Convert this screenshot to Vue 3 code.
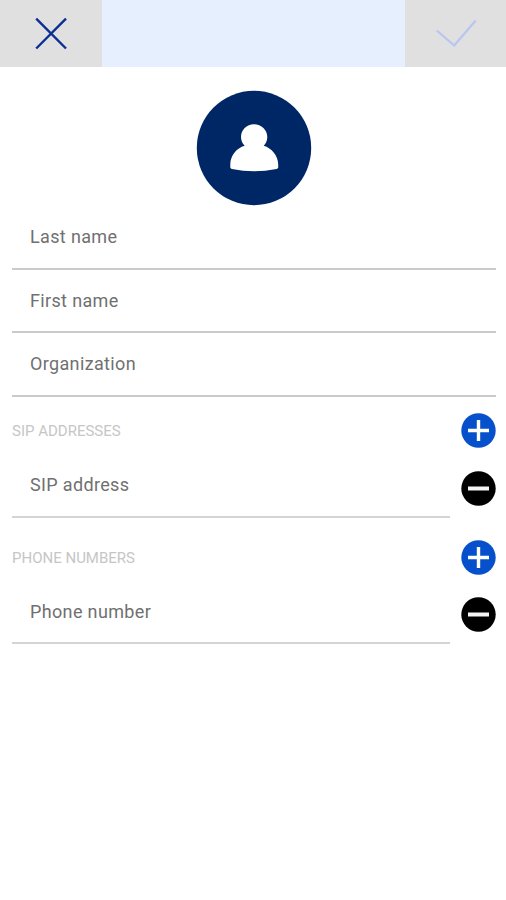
<script setup>
const fields = ['Last name', 'First name', 'Organization']
const sections = [
  { title: 'SIP ADDRESSES', label: 'SIP address', key: 'sip' },
  { title: 'PHONE NUMBERS', label: 'Phone number', key: 'phone' },
]
</script>

<template>
  <main class="screen">
    <header class="topbar">
      <button class="action" aria-label="Cancel">
        <svg width="101" height="68" viewBox="0 0 101 68">
          <path d="M36.2 18.700L66 48.500M66 18.700L36.200 48.500" fill="none" stroke="#0d2f92" stroke-width="2.400" />
        </svg>
      </button>
      <div class="spacer"></div>
      <button class="action" aria-label="Save">
        <svg width="101" height="68" viewBox="0 0 101 68">
          <path d="M31.700 30.500L49.200 45.500L70.700 20.500" fill="none" stroke="#b8c6f1" stroke-width="2.300" />
        </svg>
      </button>
    </header>

    <div class="avatar">
      <svg width="116" height="116" viewBox="0 0 116 116">
        <circle cx="58" cy="58" r="57.200" fill="#002765" />
        <path
          d="M58 34.200C65.500 34.200 71.300 40 71.300 47C71.300 50.500 69.800 53.700 67.700 55.700C75.500 58 82.200 65.500 82.200 74.500V77.800Q81.800 78.700 80.500 79Q58 83.600 36 79Q34.700 78.700 34.300 77.800V74.500C34.300 65.500 40.500 58 48.700 55.700C46.500 53.700 45 50.500 45 47C45 40 50.500 34.200 58 34.200Z"
          fill="#fff"
        />
      </svg>
    </div>

    <form class="form">
      <div v-for="field in fields" :key="field" class="field">
        <span class="label">{{ field }}</span>
      </div>

      <section v-for="section in sections" :key="section.key" :class="['group', section.key]">
        <div class="heading">
          <h2 class="title">{{ section.title }}</h2>
          <svg width="35" height="35" viewBox="0 0 35 35">
            <circle cx="17.500" cy="17.500" r="17.200" fill="#0750cc" />
            <path d="M17.500 7V28M7 17.500H28" stroke="#fff" stroke-width="3.400" />
          </svg>
        </div>
        <div class="entry">
          <div class="field short">
            <span class="label">{{ section.label }}</span>
          </div>
          <svg width="35" height="35" viewBox="0 0 35 35">
            <circle cx="17.500" cy="17.500" r="17.200" fill="#000" />
            <path d="M7 17.500H28" stroke="#f4f4f4" stroke-width="4" />
          </svg>
        </div>
      </section>
    </form>
  </main>
</template>

<style>
body {
  background: #fff;
}
</style>

<style scoped>
.screen {
  width: 506px;
  height: 900px;
  overflow: hidden;
  background: #fff;
  font-family: Roboto, "Liberation Sans", sans-serif;
}
svg {
  display: block;
  flex: none;
}
.topbar {
  display: grid;
  grid-template-columns: 102px 1fr 101px;
  height: 67px;
  background: #e0e0e0;
}
.action {
  padding: 0;
  border: 0;
  overflow: hidden;
  background: #e0e0e0;
}
.spacer {
  background: #e6effe;
}
.avatar {
  display: flex;
  justify-content: center;
  padding: 23px 0 0 2px;
}
.form {
  padding: 0 10px 0 12px;
}
.field {
  box-sizing: border-box;
  height: 63.6px;
  padding: 20px 18px 0;
  border-bottom: 2px solid #cacaca;
}
.label {
  display: block;
  font-size: 18px;
  line-height: 22px;
  letter-spacing: 0.35px;
  color: #707070;
}
.group {
  height: 121px;
}
.phone {
  margin-top: 5.4px;
}
.heading {
  display: flex;
  align-items: center;
  justify-content: space-between;
  height: 68px;
}
.title {
  margin: 1px 0 0;
  font-size: 15px;
  font-weight: 400;
  color: #c6c6c6;
}
.entry {
  display: flex;
  justify-content: space-between;
  height: 53px;
  align-items: flex-start;
}
.entry > svg {
  margin-top: 6px;
}
.short {
  width: 438px;
  height: 53px;
  padding-top: 9.500px;
  border-color: #d4d4d4;
}
</style>
